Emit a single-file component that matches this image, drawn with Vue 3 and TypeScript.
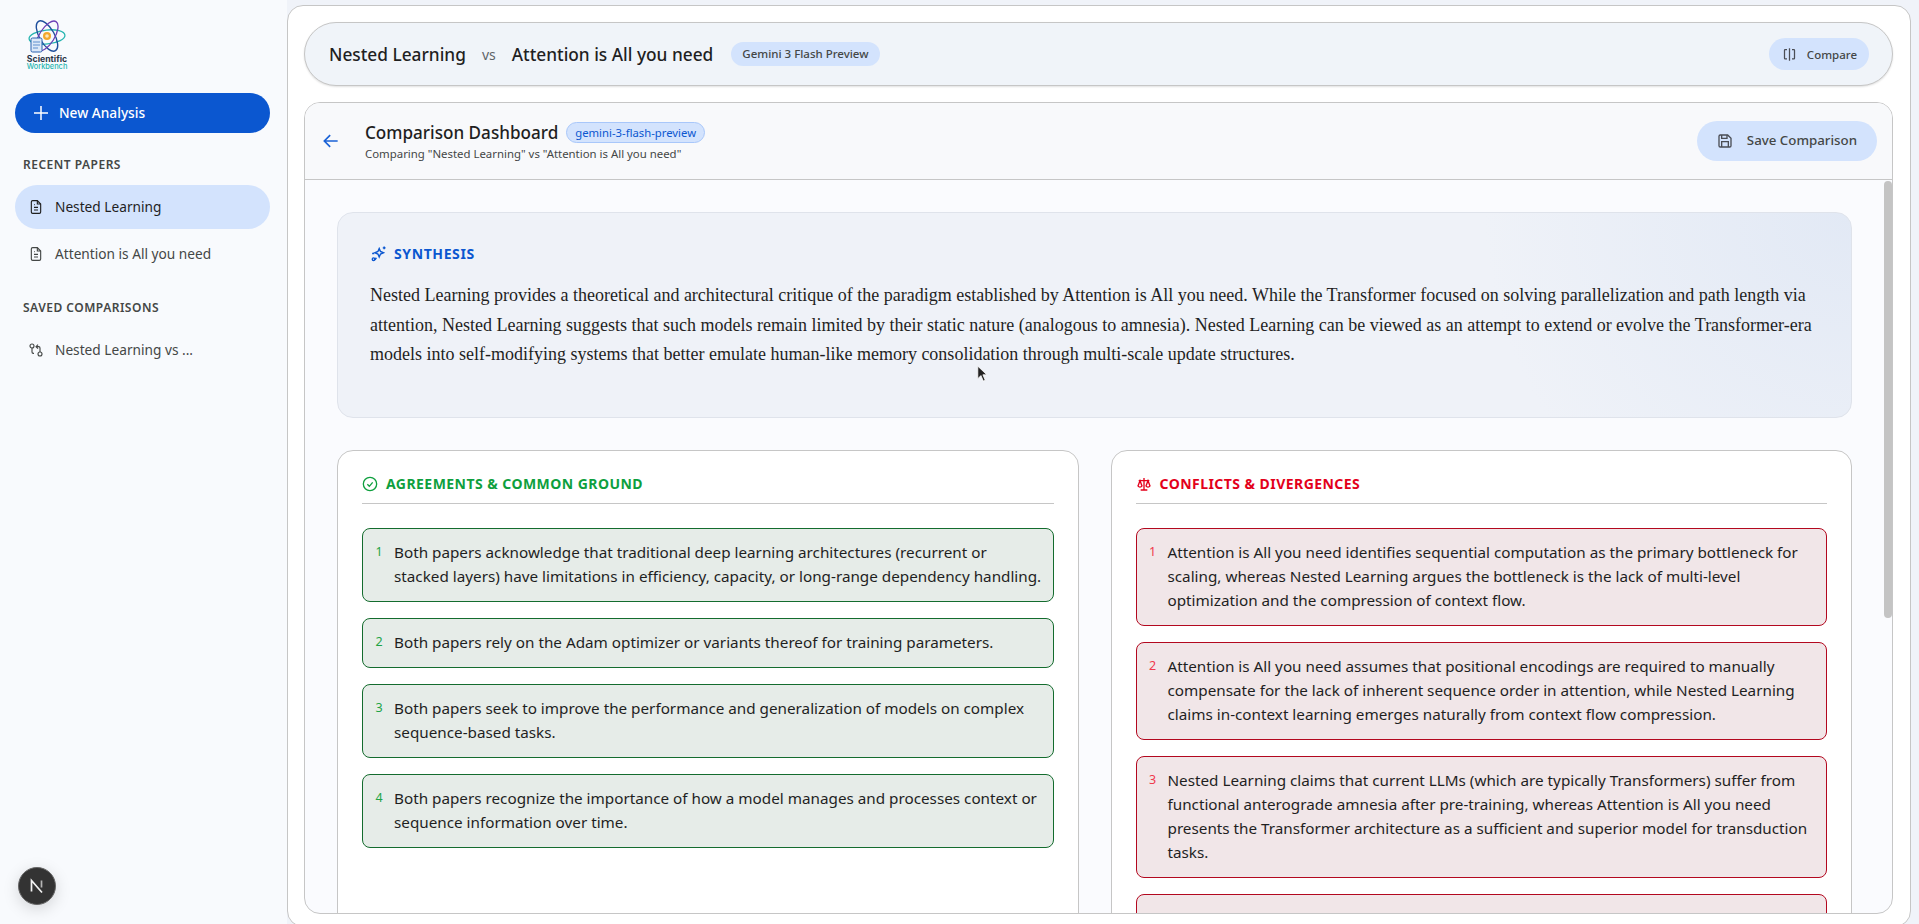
<script setup lang="ts">
const agreements: string[] = [
  'Both papers acknowledge that traditional deep learning architectures (recurrent or stacked layers) have limitations in efficiency, capacity, or long-range dependency handling.',
  'Both papers rely on the Adam optimizer or variants thereof for training parameters.',
  'Both papers seek to improve the performance and generalization of models on complex sequence-based tasks.',
  'Both papers recognize the importance of how a model manages and processes context or sequence information over time.',
]
const conflicts: string[] = [
  'Attention is All you need identifies sequential computation as the primary bottleneck for scaling, whereas Nested Learning argues the bottleneck is the lack of multi-level optimization and the compression of context flow.',
  'Attention is All you need assumes that positional encodings are required to manually compensate for the lack of inherent sequence order in attention, while Nested Learning claims in-context learning emerges naturally from context flow compression.',
  'Nested Learning claims that current LLMs (which are typically Transformers) suffer from functional anterograde amnesia after pre-training, whereas Attention is All you need presents the Transformer architecture as a sufficient and superior model for transduction tasks.',
  'Attention is All you need focuses on computation architecture post-training, while Nested Learning advocates continuous self-modification across multiple time scales.',
]
</script>

<template>
  <div class="app">
    <aside class="sidebar">
      <div class="logo">
        <svg width="40" height="33" viewBox="0 0 40 33" fill="none">
          <ellipse cx="20" cy="17" rx="18" ry="7" stroke="#27b5b0" stroke-width="1.3" transform="rotate(-6 20 17)" />
          <ellipse cx="20" cy="16" rx="7.500" ry="17" stroke="#1e4f9c" stroke-width="1.4" transform="rotate(-30 20 16)" />
          <ellipse cx="20" cy="16" rx="7.500" ry="17" stroke="#6b3fb5" stroke-width="1.300" transform="rotate(32 20 16)" />
          <circle cx="20" cy="16" r="4" fill="#f3a72c" />
          <circle cx="20" cy="16" r="1.800" fill="#fbe6b8" />
          <rect x="4" y="18" width="11" height="14" rx="1.500" fill="#dbe8f8" stroke="#2a63b0" />
          <path d="M6 22h7M6 25h7M6 28h5" stroke="#5e8fce" />
        </svg>
        <div class="logo-a">Scientific</div>
        <div class="logo-b">Workbench</div>
      </div>
      <button class="new">
        <svg width="14" height="14" viewBox="0 0 14 14" fill="none" stroke="#fff" stroke-width="1.500"><path d="M7 0v14M0 7h14" /></svg>
        <span>New Analysis</span>
      </button>
      <div class="section">RECENT PAPERS</div>
      <div class="item active">
        <svg class="ico" viewBox="0 0 24 24"><path d="M14 2.500H7a2 2 0 0 0-2 2v15a2 2 0 0 0 2 2h10a2 2 0 0 0 2-2V7.500z" /><path d="M14 2.500v5h5M9 12.500h6M9 16.500h6M9 8.500h1" /></svg>
        <span>Nested Learning</span>
      </div>
      <div class="item">
        <svg class="ico" viewBox="0 0 24 24"><path d="M14 2.500H7a2 2 0 0 0-2 2v15a2 2 0 0 0 2 2h10a2 2 0 0 0 2-2V7.500z" /><path d="M14 2.500v5h5M9 12.500h6M9 16.500h6M9 8.500h1" /></svg>
        <span>Attention is All you need</span>
      </div>
      <div class="section">SAVED COMPARISONS</div>
      <div class="item">
        <svg class="ico" viewBox="0 0 24 24"><circle cx="6" cy="6" r="3" /><circle cx="18" cy="18" r="3" /><path d="M6 9v6a2 2 0 0 0 2 2h1M18 15V9a2 2 0 0 0-2-2h-3M15 4l-3 3 3 3" /></svg>
        <span>Nested Learning vs ...</span>
      </div>
      <div class="next-badge">
        <svg width="16" height="16" viewBox="0 0 16 16" fill="none" stroke-width="1.700"><path d="M2.500 13.500V2.500L13 14.500" stroke="#f2f2f2" /><path d="M12.500 2.500v7" stroke="#b5b5b5" /></svg>
      </div>
    </aside>

    <main class="main">
      <div class="panel">
        <header class="pill">
          <span class="title">Nested Learning</span>
          <span class="vs">vs</span>
          <span class="title">Attention is All you need</span>
          <span class="chip">Gemini 3 Flash Preview</span>
          <button class="compare">
            <svg width="15" height="15" viewBox="0 0 24 24" fill="none" stroke="#4a4d55" stroke-width="2"><path d="M8 4H5a1 1 0 0 0-1 1v13a1 1 0 0 0 1 1h3M16 4h3a1 1 0 0 1 1 1v13a1 1 0 0 1-1 1h-3M12 2v20" /></svg>
            Compare
          </button>
        </header>

        <section class="dash">
          <div class="dash-head">
            <svg class="back" width="20" height="20" viewBox="0 0 24 24" fill="none" stroke="#1a62d6" stroke-width="2"><path d="M20 12H4.500M11 5l-7 7 7 7" /></svg>
            <div class="dash-titles">
              <div class="dash-row">
                <span class="dash-title">Comparison Dashboard</span>
                <span class="model">gemini-3-flash-preview</span>
              </div>
              <div class="dash-sub">Comparing "Nested Learning" vs "Attention is All you need"</div>
            </div>
            <button class="save">
              <svg width="16" height="16" viewBox="0 0 24 24" fill="none" stroke="#4a4d55" stroke-width="2"><path d="M5 3h11l5 5v11a2 2 0 0 1-2 2H5a2 2 0 0 1-2-2V5a2 2 0 0 1 2-2z" /><path d="M7 3v5h8V3M7 21v-8h10v8" /></svg>
              <span>Save Comparison</span>
            </button>
          </div>
          <div class="scroll">
            <div class="synth">
              <div class="synth-head">
                <svg width="17" height="17" viewBox="0 0 24 24" fill="none" stroke="#0b57d0" stroke-width="2"><path d="M13 5l1.800 4.200L19 11l-4.200 1.800L13 17l-1.800-4.200L7 11l4.200-1.800z" /><path d="M20 2v4M18 4h4" /><circle cx="5" cy="20" r="1.800" /><path d="M3 12h3M9 18l-2 3" /></svg>
                SYNTHESIS
              </div>
              <p>Nested Learning provides a theoretical and architectural critique of the paradigm established by Attention is All you need. While the Transformer focused on solving parallelization and path length via attention, Nested Learning suggests that such models remain limited by their static nature (analogous to amnesia). Nested Learning can be viewed as an attempt to extend or evolve the Transformer-era models into self-modifying systems that better emulate human-like memory consolidation through multi-scale update structures.</p>
            </div>
            <div class="cols">
              <div class="col">
                <h3 class="col-head green">
                  <svg width="16" height="16" viewBox="0 0 24 24" fill="none" stroke="#0e9f3e" stroke-width="2"><circle cx="12" cy="12" r="10" /><path d="M8 12.500l3 3 5-6" /></svg>
                  AGREEMENTS &amp; COMMON GROUND
                </h3>
                <div v-for="(t, i) in agreements" :key="i" class="card agree">
                  <span class="num">{{ i + 1 }}</span>
                  <span class="txt">{{ t }}</span>
                </div>
              </div>
              <div class="col">
                <h3 class="col-head red">
                  <svg width="16" height="16" viewBox="0 0 24 24" fill="none" stroke="#e3001b" stroke-width="2"><path d="M12 3v18M7 21h10M4 7h16" /><path d="M6 7l-3 8a3.500 3.500 0 0 0 6 0zM18 7l-3 8a3.500 3.500 0 0 0 6 0z" /></svg>
                  CONFLICTS &amp; DIVERGENCES
                </h3>
                <div v-for="(t, i) in conflicts" :key="i" class="card conflict">
                  <span class="num">{{ i + 1 }}</span>
                  <span class="txt">{{ t }}</span>
                </div>
              </div>
            </div>
          </div>
          <div class="thumb"></div>
        </section>
      </div>
    </main>
    <svg class="cursor" width="11" height="18" viewBox="0 0 14 22"><path d="M1 1v16l4-4 3 7 2.500-1-3-7h5z" fill="#222" stroke="#fff" stroke-width="1" /></svg>
  </div>
</template>

<style>
html, body { margin: 0; height: 100%; overflow: hidden; }
</style>

<style scoped>
.app {
  position: relative;
  display: flex;
  height: 924px;
  background: #f0f3f9;
  font-family: "Noto Sans", "Open Sans", sans-serif;
  color: #1f1f1f;
  overflow: hidden;
}
.sidebar {
  position: relative;
  width: 287px;
  flex: none;
  box-sizing: border-box;
  padding: 20px 15px 0;
  background: #f8fafd;
}
.logo {
  width: 40px;
  margin-left: 12px;
  height: 73px;
  text-align: center;
  display: flex;
  flex-direction: column;
  align-items: center;
}
.logo svg { flex: none; }
.logo-a { font: 700 8.700px/8px "Inter", sans-serif; color: #2b3648; margin-top: 2px; white-space: nowrap; }
.logo-b { font: 500 7.400px/7px "Inter", sans-serif; color: #27b5b0; white-space: nowrap; }
.new {
  display: flex;
  align-items: center;
  gap: 11px;
  width: 255px;
  height: 40px;
  padding: 0 0 0 19px;
  border: 0;
  border-radius: 20px;
  background: #0b57d0;
  color: #fff;
  font: 500 13.700px "Noto Sans", sans-serif;
}
.new span, .save span, .item span { padding-bottom: 2px; }
.section {
  margin: 23px 0 0 8px;
  height: 18px;
  font-size: 12px;
  line-height: 18px;
  font-weight: 600;
  letter-spacing: 0.5px;
  color: #444746;
}
.item {
  display: flex;
  align-items: center;
  gap: 11px;
  width: 255px;
  height: 44px;
  margin-top: 3px;
  box-sizing: border-box;
  padding-left: 13px;
  border-radius: 22px;
  font-size: 13.700px;
  color: #444746;
}
.section + .item { margin-top: 11px; }
.item.active { background: #d3e3fd; color: #1f1f1f; }
.ico { width: 16px; height: 16px; fill: none; stroke: currentColor; stroke-width: 1.700; flex: none; }
.next-badge {
  position: absolute;
  left: 18px;
  top: 867px;
  width: 38px;
  height: 38px;
  box-sizing: border-box;
  border-radius: 50%;
  background: #333;
  border: 1px solid #666;
  box-shadow: 0 4px 16px rgba(0, 0, 0, 0.15);
  display: flex;
  align-items: center;
  justify-content: center;
}
.main { flex: 1; min-width: 0; padding: 5px 8px 0 0; }
.panel {
  height: 922px;
  box-sizing: border-box;
  padding: 16px 17px 12px 16px;
  background: #fff;
  border: 1px solid #c6c6c6;
  border-radius: 16px;
  display: flex;
  flex-direction: column;
}
.pill {
  display: flex;
  align-items: center;
  flex: none;
  height: 64px;
  box-sizing: border-box;
  padding: 0 23px 0 24px;
  background: #f0f4f9;
  border: 1px solid #c6c6c6;
  border-radius: 32px;
  box-shadow: 0 1px 2px rgba(0, 0, 0, 0.12);
}
.title { font-size: 17.300px; font-weight: 500; color: #1f1f1f; }
.vs { margin: 0 16px; font-size: 14px; color: #5f6368; }
.chip {
  margin-left: 18px;
  padding: 0 11px;
  height: 24px;
  line-height: 24px;
  border-radius: 12px;
  background: #d3e3fd;
  font-size: 11.500px;
  font-weight: 500;
  color: #444746;
}
.compare {
  margin-left: auto;
  display: flex;
  align-items: center;
  gap: 10px;
  height: 32px;
  padding: 0 12px 0 13px;
  border: 0;
  border-radius: 16px;
  background: #d3e3fd;
  color: #444746;
  font: 500 11.500px "Noto Sans", sans-serif;
}
.dash {
  position: relative;
  flex: 1;
  min-height: 0;
  margin-top: 16px;
  display: flex;
  flex-direction: column;
  background: #fafbfe;
  border: 1px solid #c6c6c6;
  border-radius: 16px;
  overflow: hidden;
}
.dash-head {
  flex: none;
  height: 77px;
  box-sizing: border-box;
  display: flex;
  align-items: center;
  padding: 0 15px 0 16px;
  background: #f8f9fb;
  border-bottom: 1px solid #c6c6c6;
}
.dash-titles { margin-left: 24px; }
.dash-row { display: flex; align-items: center; gap: 8px; }
.dash-title { font-size: 17.100px; font-weight: 500; color: #1f1f1f; }
.model {
  height: 21px;
  line-height: 19px;
  box-sizing: border-box;
  padding: 0 8px;
  border: 1px solid #a8c7fa;
  border-radius: 11px;
  background: #d3e3fd;
  color: #0b57d0;
  font-size: 11.300px;
}
.dash-sub { margin-top: 2px; font-size: 11.400px; color: #444746; }
.save {
  margin-left: auto;
  display: flex;
  align-items: center;
  gap: 14px;
  height: 40px;
  padding: 0 20px;
  border: 0;
  border-radius: 20px;
  background: #d3e3fd;
  color: #444746;
  font: 500 13.300px "Noto Sans", sans-serif;
}
.scroll {
  flex: 1;
  min-height: 0;
  overflow: hidden;
  box-sizing: border-box;
  padding: 32px 40px 32px 32px;
}
.thumb {
  position: absolute;
  top: 78px;
  right: 0;
  width: 8px;
  height: 437px;
  border-radius: 4px;
  background: #c4c4c4;
}
.synth {
  box-sizing: border-box;
  height: 206px;
  padding: 31px 32px 0;
  border: 1px solid #dfe3eb;
  border-radius: 16px;
  background: radial-gradient(circle at 100% 0, #e2e9f5 0, #eff2f8 24%);
}
.synth-head {
  display: flex;
  align-items: center;
  gap: 7px;
  font-size: 14px;
  line-height: 19px;
  font-weight: 700;
  letter-spacing: 0.6px;
  color: #0b57d0;
}
.synth p {
  margin: 18px 0 0;
  font-family: "Liberation Serif", serif;
  font-size: 18px;
  line-height: 29.500px;
  color: #1f1f1f;
}
.cols {
  display: grid;
  grid-template-columns: 1fr 1fr;
  gap: 32px;
  min-height: 931px;
  margin-top: 32px;
}
.col {
  box-sizing: border-box;
  padding: 23px 24px 24px;
  background: #fff;
  border: 1px solid #c6c6c6;
  border-radius: 16px;
}
.col-head {
  display: flex;
  align-items: center;
  gap: 8px;
  margin: 0 0 24px;
  padding-bottom: 9px;
  border-bottom: 1px solid #c6c6c6;
  font-size: 14px;
  line-height: 20px;
  font-weight: 700;
  letter-spacing: 0.45px;
}
.green { color: #0e9f3e; }
.red { color: #e3001b; }
.card {
  display: flex;
  gap: 11px;
  box-sizing: border-box;
  margin-bottom: 16px;
  padding: 11px 8px 13px 12px;
  border-radius: 8px;
  border: 1px solid;
  font-size: 15.250px;
  line-height: 24px;
  color: #1f1f1f;
}
.agree { background: #e6ece8; border-color: #146c2e; }
.conflict { background: #f1e6e8; border-color: #b3081f; }
.num { flex: none; width: 8px; font-size: 12.500px; line-height: 24px; text-align: center; }
.agree .num { color: #1ea446; }
.conflict .num { color: #f03a4c; }
.txt { min-width: 0; }
.cursor { position: absolute; left: 977px; top: 365px; }
</style>
